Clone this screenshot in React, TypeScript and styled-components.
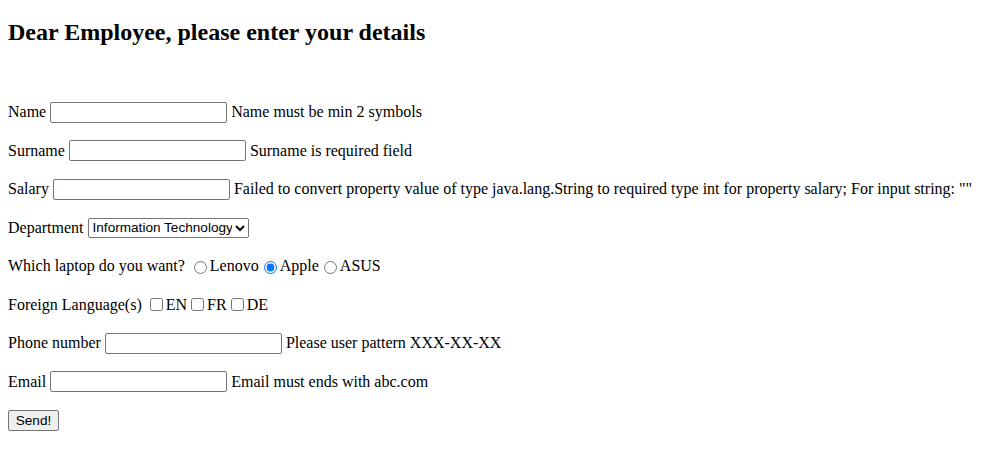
import React from "react";
import styled, { createGlobalStyle } from "styled-components";

const Global = createGlobalStyle`
  html, body { margin: 0; padding: 0; background: #fff; }
  body { font-family: "Liberation Serif", "Times New Roman", serif; font-size: 16px; color: #000; }
`;

const Page = styled.div`
  padding: 18px 8px 0 8px;
`;

const Heading = styled.h2`
  margin: 0 0 46.75px 0;
  font-size: 24px;
  line-height: 28px;
  font-weight: bold;
`;

const Form = styled.form`
  display: flex;
  flex-direction: column;
`;

const Row = styled.div`
  display: flex;
  align-items: center;
  gap: 4px;
  height: 38.5px;
  flex: 0 0 38.5px;
  white-space: nowrap;
`;

const Label = styled.span`
  line-height: normal;
`;

const TextInput = styled.input`
  box-sizing: border-box;
  width: 177px;
  height: 21px;
  margin: 0;
  padding: 1px 2px;
  border: 1px solid #767676;
  border-radius: 2px;
  font: 13.333px "Liberation Sans", Arial, sans-serif;
  background: #fff;
`;

const Select = styled.select`
  box-sizing: border-box;
  width: 161px;
  height: 20px;
  margin: 0;
  font: 13.6px "Liberation Sans", Arial, sans-serif;
  color: #000;
`;

const Options = styled.span`
  display: flex;
  align-items: center;
`;

const Radio = styled.input.attrs({ type: "radio" })`
  width: 13px;
  height: 13px;
  margin: 3px 3px 0 5px;
`;

const Check = styled.input.attrs({ type: "checkbox" })`
  width: 13px;
  height: 13px;
  margin: 3px 3px 3px 4px;
`;

const Button = styled.button`
  box-sizing: border-box;
  margin: 0;
  height: 21px;
  width: 51px;
  padding: 1px 6px;
  font: 13.6px "Liberation Sans", Arial, sans-serif;
  background: #efefef;
  border: 1px solid #767676;
  border-radius: 2px;
  color: #000;
`;

export default function App() {
  return (
    <>
      <Global />
      <Page>
        <Heading>Dear Employee, please enter your details</Heading>
        <Form onSubmit={(e) => e.preventDefault()}>
          <Row>
            <Label>Name</Label>
            <TextInput type="text" />
            <Label>Name must be min 2 symbols</Label>
          </Row>
          <Row>
            <Label>Surname</Label>
            <TextInput type="text" />
            <Label>Surname is required field</Label>
          </Row>
          <Row>
            <Label>Salary</Label>
            <TextInput type="text" />
            <Label>
              Failed to convert property value of type java.lang.String to required type int for property salary; For input string: ""
            </Label>
          </Row>
          <Row>
            <Label>Department</Label>
            <Select defaultValue="it">
              <option value="it">Information Technology</option>
              <option value="hr">Human Resources</option>
              <option value="sales">Sales</option>
            </Select>
          </Row>
          <Row>
            <Label>Which laptop do you want?</Label>
            <Options>
              <Radio name="laptop" id="l1" />
              <Label as="label" htmlFor="l1">Lenovo</Label>
              <Radio name="laptop" id="l2" defaultChecked />
              <Label as="label" htmlFor="l2">Apple</Label>
              <Radio name="laptop" id="l3" />
              <Label as="label" htmlFor="l3">ASUS</Label>
            </Options>
          </Row>
          <Row>
            <Label>Foreign Language(s)</Label>
            <Options>
              <Check id="c1" />
              <Label as="label" htmlFor="c1">EN</Label>
              <Check id="c2" />
              <Label as="label" htmlFor="c2">FR</Label>
              <Check id="c3" />
              <Label as="label" htmlFor="c3">DE</Label>
            </Options>
          </Row>
          <Row>
            <Label>Phone number</Label>
            <TextInput type="text" />
            <Label>Please user pattern XXX-XX-XX</Label>
          </Row>
          <Row>
            <Label>Email</Label>
            <TextInput type="text" />
            <Label>Email must ends with abc.com</Label>
          </Row>
          <Row>
            <Button type="submit">Send!</Button>
          </Row>
        </Form>
      </Page>
    </>
  );
}
